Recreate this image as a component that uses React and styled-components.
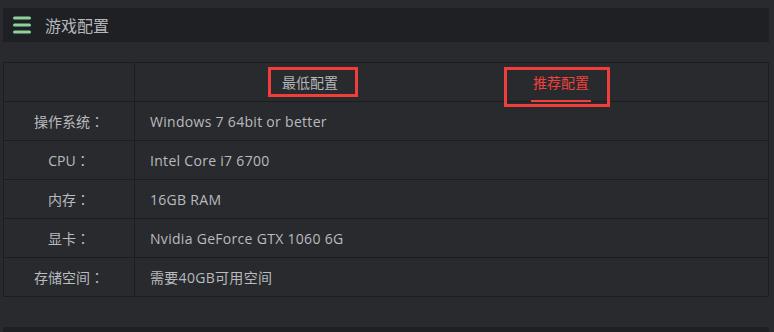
import React from "react";
import styled, { createGlobalStyle } from "styled-components";

const Global = createGlobalStyle`
  html, body { margin: 0; padding: 0; background: #292a2e; }
  body { font-family: "Open Sans", "Noto Sans CJK SC", sans-serif; }
`;

const Page = styled.div`
  width: 766px;
  margin-left: 3px;
  padding-top: 8px;
  display: flex;
  flex-direction: column;
`;

const TitleBar = styled.div`
  height: 34px;
  background: #1f2023;
  display: flex;
  align-items: center;
  padding-left: 10px;
  gap: 14px;
`;

const Title = styled.span`
  font-family: "Noto Sans CJK SC", sans-serif;
  font-size: 16px;
  color: #b4b7bb;
  line-height: 1;
`;

const Table = styled.div`
  margin-top: 20px;
  border: 1px solid #1c1d20;
  display: grid;
  grid-template-columns: 131px 1fr;
`;

const Cell = styled.div`
  height: 38px;
  display: flex;
  align-items: center;
  justify-content: ${(p) => (p.$label ? "center" : "flex-start")};
  padding-left: ${(p) => (p.$label ? "0" : "15px")};
  border-right: ${(p) => (p.$label ? "1px solid #1c1d20" : "none")};
  border-top: ${(p) => (p.$first ? "none" : "1px solid #1c1d20")};
  font-family: "Open Sans", "Noto Sans CJK SC", sans-serif;
  font-size: 14px;
  letter-spacing: ${(p) => (p.$label ? "0" : "0.3px")};
  color: #b8bbbf;
`;

const Colon = styled.span`
  font-family: "Noto Sans CJK TC", sans-serif;
`;

const TabCell = styled.div`
  height: 38px;
  display: flex;
  align-items: stretch;
  padding-left: 147px;
  gap: 195px;
`;

const Tab = styled.div`
  position: relative;
  display: flex;
  align-items: center;
  font-family: "Noto Sans CJK SC", sans-serif;
  font-size: 14px;
  color: ${(p) => (p.$active ? "#f0413a" : "#b4b7bb")};
  &::after {
    content: "";
    display: ${(p) => (p.$active ? "block" : "none")};
    position: absolute;
    left: -2px;
    right: -2px;
    bottom: -1px;
    height: 2px;
    background: #f0413a;
  }
`;

const Mark = styled.div`
  position: absolute;
  border: 3px solid #f23d3d;
  pointer-events: none;
  left: ${(p) => p.$l}px;
  right: ${(p) => p.$r}px;
  top: ${(p) => p.$t}px;
  bottom: ${(p) => p.$b}px;
`;

const Footer = styled.div`
  margin-top: 30px;
  height: 6px;
  background: #1f2023;
`;

const MenuIcon = () => (
  <svg width="18" height="18" viewBox="0 0 18 18">
    <rect x="0" y="0.5" width="18" height="3" rx="1.5" fill="#8fd19e" />
    <rect x="0" y="7.5" width="18" height="3" rx="1.5" fill="#8fd19e" />
    <rect x="0" y="14.5" width="18" height="3" rx="1.5" fill="#8fd19e" />
  </svg>
);

const rows = [
  ["操作系统", "Windows 7 64bit or better"],
  ["CPU", "Intel Core i7 6700"],
  ["内存", "16GB RAM"],
  ["显卡", "Nvidia GeForce GTX 1060 6G"],
  ["存储空间", "需要40GB可用空间"],
];

export default function App() {
  return (
    <>
      <Global />
      <Page>
        <TitleBar>
          <MenuIcon />
          <Title>游戏配置</Title>
        </TitleBar>
        <Table>
          <Cell $label $first />
          <TabCell>
            <Tab>
              最低配置
              <Mark $l={-14} $r={-20} $t={4} $b={4} />
            </Tab>
            <Tab $active>
              推荐配置
              <Mark $l={-29} $r={-21} $t={4} $b={-6} />
            </Tab>
          </TabCell>
          {rows.map(([k, v]) => (
            <React.Fragment key={k}>
              <Cell $label>
                {k}
                <Colon>：</Colon>
              </Cell>
              <Cell>{v}</Cell>
            </React.Fragment>
          ))}
        </Table>
        <Footer />
      </Page>
    </>
  );
}
